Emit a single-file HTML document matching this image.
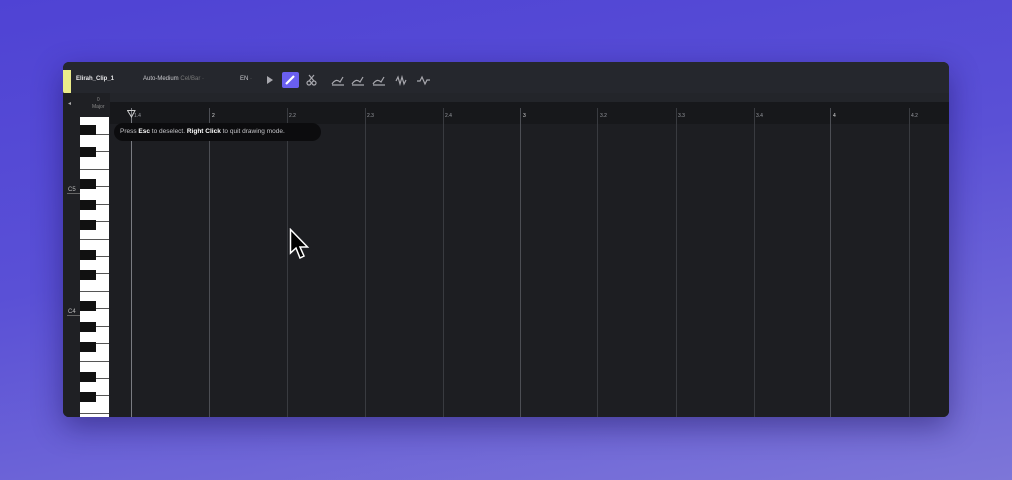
<!DOCTYPE html>
<html><head><meta charset="utf-8"><style>
*{margin:0;padding:0;box-sizing:border-box}
body{width:1012px;height:480px;overflow:hidden;font-family:"Liberation Sans",sans-serif;
background:linear-gradient(170deg,#4f43d4 0%,#5a50d6 45%,#7d76d8 100%);position:relative}
.win{position:absolute;left:63px;top:62px;width:886px;height:355px;background:#1b1c1f;border-radius:6px;overflow:hidden;box-shadow:0 10px 30px rgba(20,10,80,.45)}
.tb{position:absolute;left:0;top:0;width:886px;height:31px;background:#25272d}
.tab{position:absolute;left:0;top:8px;width:8px;height:24px;background:#ecec8a;border-radius:0 0 0 3px}
.t{position:absolute;font-size:6px;color:#c8c8cc;white-space:nowrap}
.ruler{position:absolute;left:47px;top:31px;width:839px;height:9px;background:#23252a}
.ruler2{position:absolute;left:47px;top:40px;width:839px;height:22px;background:#17181b}
.side{position:absolute;left:0;top:31px;width:47px;height:324px;background:#1f2024}
.grid{position:absolute;left:47px;top:62px;width:839px;height:293px;background:#1d1e22}
.vl{position:absolute;top:46px;width:1px;height:310px;background:#393b40}
.lab{position:absolute;top:51px;font-size:5px;color:#9a9ca2}
.tip{position:absolute;left:51px;top:61px;width:207px;height:18px;background:#0c0c0e;border-radius:9px;color:#c4c4c8;font-size:6.5px;line-height:18px;padding-left:6px}
.tip b{color:#fff}
.keys{position:absolute;left:17px;top:55px;width:29px;height:300px;background:#fff}
.wk{position:absolute;left:0;width:29px;height:1px;background:#555}
.bk{position:absolute;left:0;width:16px;height:10px;background:#111}
</style></head><body>
<div class="win">
<div class="tb"></div>
<div class="tab"></div>
<div class="t" style="left:13px;top:14px;font-weight:bold;color:#e8e8ea">Elirah_Clip_1</div>
<div class="t" style="left:80px;top:14px">Auto-Medium <span style="color:#777">Cel/Bar ·</span></div>
<div class="t" style="left:177px;top:14px">EN <span style="color:#777">·</span></div>
<svg style="position:absolute;left:200px;top:10px" width="180" height="16" viewBox="0 0 180 16">
<path d="M4 4 L10 8 L4 12Z" fill="#a8a8ae"/>
<rect x="19" y="0" width="17" height="16" rx="2" fill="#6a5ff0"/>
<path d="M23 12 L31 4" stroke="#fff" stroke-width="2.2"/>
<g stroke="#a8a8ae" fill="none" stroke-width="1.2"><circle cx="46" cy="11" r="2"/><circle cx="51" cy="11" r="2"/><path d="M46 9 L51 3 M51 9 L46 3"/>
<path d="M69 12 Q73 6 77 10 L80 5 M69 13 H81"/>
<path d="M89 12 Q93 6 97 10 L100 5 M89 13 H101"/>
<path d="M110 12 Q114 6 118 10 L121 5 M110 13 H122"/>
<path d="M133 9 L135 5 L137 12 L139 5 L141 12 L143 8"/>
<path d="M154 9 H157 L159 5 L162 12 L164 8 H167"/></g>
</svg>
<div class="side"></div>
<div class="t" style="left:5px;top:38px;font-size:6px;color:#aaa">◂</div>
<div class="t" style="left:29px;top:35px;font-size:5px;color:#888;text-align:center;line-height:7px">0<br>Major</div>
<div class="ruler"></div><div class="ruler2"></div>
<div class="grid"></div>
<div class="keys">
<div class="wk" style="top:17px"></div><div class="wk" style="top:34px"></div><div class="wk" style="top:52px"></div><div class="wk" style="top:69px"></div><div class="wk" style="top:87px"></div><div class="wk" style="top:104px"></div><div class="wk" style="top:122px"></div><div class="wk" style="top:139px"></div><div class="wk" style="top:156px"></div><div class="wk" style="top:174px"></div><div class="wk" style="top:191px"></div><div class="wk" style="top:209px"></div><div class="wk" style="top:226px"></div><div class="wk" style="top:244px"></div><div class="wk" style="top:261px"></div><div class="wk" style="top:278px"></div><div class="wk" style="top:296px"></div>
<div class="bk" style="top:8px"></div><div class="bk" style="top:30px"></div><div class="bk" style="top:62px"></div><div class="bk" style="top:83px"></div><div class="bk" style="top:103px"></div><div class="bk" style="top:133px"></div><div class="bk" style="top:153px"></div><div class="bk" style="top:184px"></div><div class="bk" style="top:205px"></div><div class="bk" style="top:225px"></div><div class="bk" style="top:255px"></div><div class="bk" style="top:275px"></div>
</div>
<div style="position:absolute;left:4px;top:131px;width:13px;height:1px;background:#666"></div>
<div class="t" style="left:5px;top:125px;font-size:6px;color:#bbb">C5</div>
<div style="position:absolute;left:4px;top:253px;width:13px;height:1px;background:#666"></div>
<div class="t" style="left:5px;top:247px;font-size:6px;color:#bbb">C4</div>
<div class="vl" style="left:68px;background:#7a7c82"></div>
<svg style="position:absolute;left:64px;top:48px" width="9" height="8"><path d="M0.5 0.5 H8 L4.5 7Z" fill="none" stroke="#ccc"/></svg>
<div class="lab" style="left:71px">1.4</div>
<div class="vl" style="left:146px;background:#4c4e54"></div><div class="lab" style="left:149px;color:#ddd">2</div>
<div class="vl" style="left:224px"></div><div class="lab" style="left:226px">2.2</div>
<div class="vl" style="left:302px"></div><div class="lab" style="left:304px">2.3</div>
<div class="vl" style="left:380px"></div><div class="lab" style="left:382px">2.4</div>
<div class="vl" style="left:457px;background:#4c4e54"></div><div class="lab" style="left:460px;color:#ddd">3</div>
<div class="vl" style="left:534px"></div><div class="lab" style="left:537px">3.2</div>
<div class="vl" style="left:613px"></div><div class="lab" style="left:615px">3.3</div>
<div class="vl" style="left:691px"></div><div class="lab" style="left:693px">3.4</div>
<div class="vl" style="left:767px;background:#4c4e54"></div><div class="lab" style="left:770px;color:#ddd">4</div>
<div class="vl" style="left:846px"></div><div class="lab" style="left:848px">4.2</div>
<div class="tip">Press <b>Esc</b> to deselect. <b>Right Click</b> to quit drawing mode.</div>
<svg style="position:absolute;left:226px;top:166px" width="22" height="34" viewBox="0 0 22 34"><path d="M1.5 1.5 V25 L7 20 L11 30 L15 28 L11 19 H18.5Z" fill="#000" stroke="#fff" stroke-width="1.5"/></svg>
</div>
</body></html>
